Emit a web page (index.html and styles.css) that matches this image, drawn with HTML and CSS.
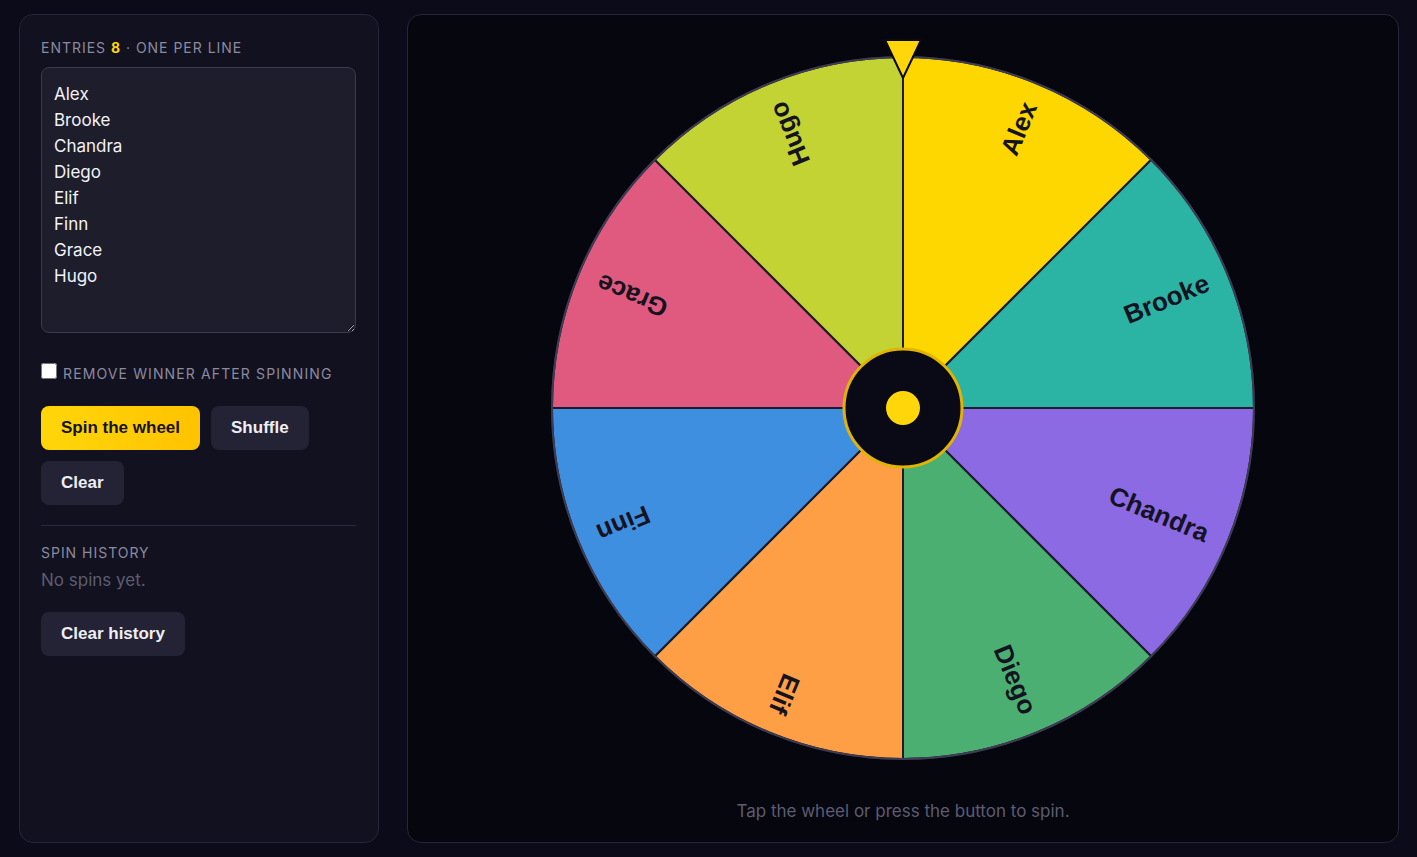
FILE: index.html
```html
<!DOCTYPE html>
<html lang="en">

<head>
    <meta charset="UTF-8">
    <meta name="viewport" content="width=device-width, initial-scale=1.0">
    <title>Wheel Spinner</title>
    <link rel="stylesheet" href="styles.css">
</head>

<body>
    <div class="app">
        <aside class="panel side">
            <label class="caps entries-label" for="entries">Entries <span class="count">8</span> · One per line</label>
            <textarea id="entries" class="entries" spellcheck="false">Alex
Brooke
Chandra
Diego
Elif
Finn
Grace
Hugo</textarea>
            <div class="option">
                <input type="checkbox" id="removeWinner">
                <label class="caps" for="removeWinner">Remove winner after spinning</label>
            </div>
            <div class="buttons">
                <button class="btn primary">Spin the wheel</button>
                <button class="btn">Shuffle</button>
                <button class="btn">Clear</button>
            </div>
            <hr class="divider">
            <p class="caps history-title">Spin history</p>
            <p class="history-empty">No spins yet.</p>
            <div class="buttons">
                <button class="btn">Clear history</button>
            </div>
        </aside>

        <main class="panel stage">
            <svg class="wheel" width="720" height="730" viewBox="0 0 720 730">
                <g class="slices">
                    <path d="M360 370 L360 19 A351 351 0 0 1 608.19 121.81 Z" fill="#fed700" />
                    <path d="M360 370 L608.19 121.81 A351 351 0 0 1 711 370 Z" fill="#2bb3a4" />
                    <path d="M360 370 L711 370 A351 351 0 0 1 608.19 618.19 Z" fill="#8b6ae4" />
                    <path d="M360 370 L608.19 618.19 A351 351 0 0 1 360 721 Z" fill="#4caf72" />
                    <path d="M360 370 L360 721 A351 351 0 0 1 111.81 618.19 Z" fill="#fe9f45" />
                    <path d="M360 370 L111.81 618.19 A351 351 0 0 1 9 370 Z" fill="#3f8fe0" />
                    <path d="M360 370 L9 370 A351 351 0 0 1 111.81 121.81 Z" fill="#e05a80" />
                    <path d="M360 370 L111.81 121.81 A351 351 0 0 1 360 19 Z" fill="#c3d334" />
                </g>
                <circle class="rim" cx="360" cy="370" r="351" />
                <g class="labels">
                    <text transform="translate(360 370) rotate(-67.5)" x="330" y="9">Alex</text>
                    <text transform="translate(360 370) rotate(-22.5)" x="330" y="9">Brooke</text>
                    <text transform="translate(360 370) rotate(22.5)" x="330" y="9">Chandra</text>
                    <text transform="translate(360 370) rotate(67.5)" x="330" y="9">Diego</text>
                    <text transform="translate(360 370) rotate(112.5)" x="330" y="9">Elif</text>
                    <text transform="translate(360 370) rotate(157.5)" x="330" y="9">Finn</text>
                    <text transform="translate(360 370) rotate(202.5)" x="330" y="9">Grace</text>
                    <text transform="translate(360 370) rotate(247.5)" x="330" y="9">Hugo</text>
                </g>
                <circle class="hub" cx="360" cy="370" r="59" />
                <circle class="hub-dot" cx="360" cy="370" r="17" />
                <polygon class="pointer" points="342,2 378,2 360,40" />
            </svg>
            <p class="hint">Tap the wheel or press the button to spin.</p>
        </main>
    </div>
</body>

</html>
```

FILE: styles.css
```css
body {
    margin: 0;
    background: #0c0b1a;
    font-family: Inter, 'Noto Sans', Arial, sans-serif;
    color: #e8e8f0;
}

.app {
    display: grid;
    grid-template-columns: 360px 1fr;
    gap: 28px;
    padding: 14px 18px 14px 19px;
    height: 829px;
}

.panel {
    border: 1px solid #26253a;
    border-radius: 14px;
}

.side {
    background: #12111f;
    padding: 24px 21px;
    display: flex;
    flex-direction: column;
    align-items: flex-start;
}

.caps {
    text-transform: uppercase;
    letter-spacing: 0.07em;
    color: #8b8a9f;
}

.entries-label {
    font-size: 14px;
    line-height: 17px;
    margin-bottom: 11px;
}

.count {
    color: #ffd60a;
    font-weight: 700;
}

.entries {
    box-sizing: border-box;
    width: 315px;
    height: 266px;
    margin: 0;
    padding: 13px 12px;
    background: #1e1d2c;
    border: 1px solid #3a394d;
    border-radius: 8px;
    color: #f2f2f7;
    font-family: Inter, 'Noto Sans', Arial, sans-serif;
    font-size: 17px;
    line-height: 26px;
    outline: none;
}

.option {
    display: flex;
    align-items: center;
    gap: 6px;
    margin-top: 32px;
}

.option input {
    width: 16px;
    height: 16px;
    margin: 0;
    position: relative;
    top: -3px;
}

.option label {
    font-size: 14px;
    line-height: 18px;
    letter-spacing: 0.08em;
}

.buttons {
    display: flex;
    flex-wrap: wrap;
    gap: 11px;
    width: 315px;
    margin-top: 23px;
}

.btn {
    height: 44px;
    padding: 0 20px;
    border: none;
    border-radius: 8px;
    background: #242335;
    color: #eeeef5;
    font-family: 'Liberation Sans', Arial, sans-serif;
    font-size: 17px;
    font-weight: 700;
    cursor: pointer;
}

.btn.primary {
    background: linear-gradient(90deg, #ffd60a, #ffc300);
    color: #14131f;
}

.divider {
    width: 315px;
    margin: 20px 0 0;
    border: none;
    border-top: 1px solid #2a2940;
}

.history-title {
    font-size: 14px;
    line-height: 18px;
    margin: 18px 0 0;
}

.history-empty {
    font-size: 17px;
    line-height: 22px;
    margin: 7px 0 0;
    color: #5d5c72;
}

.history-empty + .buttons {
    margin-top: 21px;
}

.stage {
    background: #06060f;
    display: flex;
    flex-direction: column;
    align-items: center;
}

.wheel {
    display: block;
    margin-top: 23px;
}

.rim {
    fill: none;
    stroke: #3d3c52;
    stroke-width: 2;
}

.slices path {
    stroke: #1d1b2c;
    stroke-width: 2;
    stroke-linejoin: round;
}

.labels text {
    font-family: 'Liberation Sans', Arial, sans-serif;
    font-size: 26px;
    font-weight: 700;
    fill: #14131f;
    text-anchor: end;
}

.hub {
    fill: #0a0916;
    stroke: #e0b400;
    stroke-width: 3;
}

.hub-dot {
    fill: #ffd60a;
}

.pointer {
    fill: #ffd60a;
    stroke: #0a0916;
    stroke-width: 2;
    stroke-linejoin: round;
}

.hint {
    margin: 33px 0 0;
    font-size: 17px;
    line-height: 20px;
    color: #5d5c72;
}
```
